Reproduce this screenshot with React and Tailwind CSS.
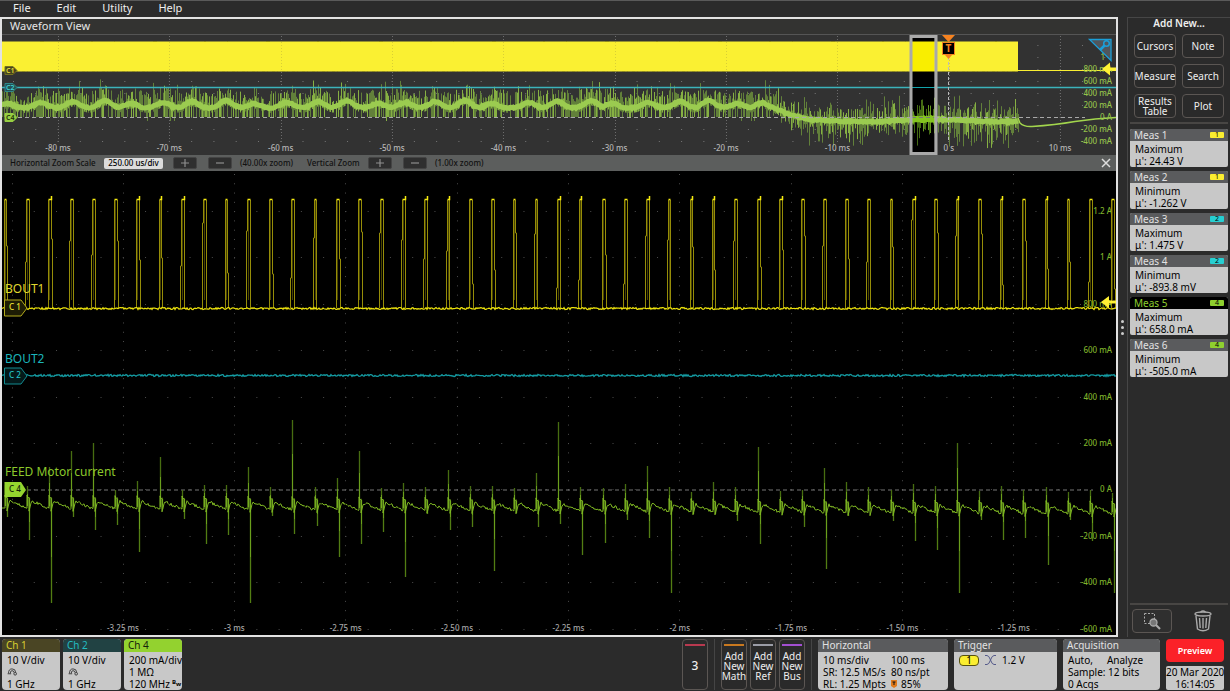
import React, { useState } from "react";

// small seeded generator so the traces look the same on every render
const makeRandom = (seed) => () => {
  seed = (seed * 1664525 + 1013904223) % 4294967296;
  return seed / 4294967296;
};

const measurements = [
  { name: "Meas 1", type: "Maximum", value: "24.43 V", source: 1 },
  { name: "Meas 2", type: "Minimum", value: "-1.262 V", source: 1 },
  { name: "Meas 3", type: "Maximum", value: "1.475 V", source: 2 },
  { name: "Meas 4", type: "Minimum", value: "-893.8 mV", source: 2 },
  { name: "Meas 5", type: "Maximum", value: "658.0 mA", source: 4, active: true },
  { name: "Meas 6", type: "Minimum", value: "-505.0 mA", source: 4 },
];

const sourceColor = {
  1: "bg-[#fbee30]",
  2: "bg-[#26cfd2]",
  4: "bg-[#8fd02f]",
};

// [top, bottom] of the current spike at each PWM pulse
const spikes = [
  [485, 517], [486, 540], [467, 603], [451, 517], [443, 530], [490, 525], [481, 552], [457, 509],
  [490, 519], [485, 544], [485, 535], [467, 603], [487, 516], [420, 534], [487, 526], [478, 557],
  [451, 544], [488, 532], [483, 577], [487, 514], [470, 530], [486, 527], [486, 571], [488, 513],
  [473, 527], [422, 524], [487, 555], [488, 543], [484, 520], [466, 538], [487, 593], [492, 514],
  [482, 514], [487, 521], [447, 544], [491, 513], [490, 527], [468, 569], [482, 516], [487, 509],
  [490, 521], [484, 541], [486, 550], [443, 593], [491, 520], [486, 540], [490, 538], [487, 565],
  [492, 520], [490, 541], [493, 593],
];

const PULSE_START = 4.5;
const PULSE_STEP = 22.15;

const pulseX = (i) => PULSE_START + i * PULSE_STEP;

const noiseLine = (y, amp, seed) => {
  const rnd = makeRandom(seed);
  let d = `M2 ${y}`;
  for (let x = 3; x <= 1116; x++) {
    d += `L${x} ${(y + (rnd() - 0.5) * amp).toFixed(1)}`;
  }
  return d;
};

const buildPulses = () => {
  const rnd = makeRandom(12);
  let edges = "";
  let tops = "";
  let inner = "";
  spikes.forEach((_, i) => {
    const x = Math.round(pulseX(i)) + 0.5 - 1;
    const w = rnd() > 0.3 ? 3 : 2;
    const bend = Math.round(220 + rnd() * 70);
    if (rnd() > 0.5) {
      edges += `M${x - 1} 308V${bend}H${x}V200M${x + w} 200V308`;
    } else {
      edges += `M${x} 308V200M${x + w} 200V${bend}H${x + w + 1}V308`;
    }
    inner += `M${x + 1} 200V300`;
    tops += rnd() > 0.65 ? `M${x} 199.5H${x + w}V196` : `M${x} 199.5H${x + w}`;
  });
  return { edges, tops, inner };
};

const buildFeed = () => {
  const rnd = makeRandom(77);
  let line = "M2 508";
  let spikeUp = "";
  let spikeDown = "";
  let core = "";
  spikes.forEach(([top, bottom], i) => {
    const x = Math.round(pulseX(i));
    const drift = (i / 50) * 6;
    const low = 508 + drift;
    line += `L${x} ${low}V${495 + drift}L${x + 1} ${498 + drift}L${x + 2} ${497 + drift}V${511 + drift}L${x + 4} ${503 + drift}`;
    for (let k = 5; k < 22; k++) {
      const y = 501 + drift * 0.9 + ((k - 5) / 16) * 7 + (rnd() - 0.5) * 3;
      line += `L${x + k} ${y.toFixed(1)}`;
    }
    spikeUp += `M${x + 0.5} ${top}V${506 + drift}`;
    spikeDown += `M${x + 2.5} ${498 + drift}V${bottom}`;
    // the part near the baseline is hit more often, so it glows brighter
    core += `M${x + 0.5} ${Math.round(506 - (506 - top) * 0.6)}V${506 + drift}`;
    core += `M${x + 2.5} ${498 + drift}V${Math.round(500 + (bottom - 500) * 0.55)}`;
  });
  return { line, spikeUp, spikeDown, core };
};

const crests = [
  7, 41, 73, 105, 131, 163, 192, 226, 254, 287, 318, 347, 378, 405, 435, 465, 492, 529, 557, 591,
  612, 648, 680, 709, 737, 763,
];

const bandY = (x) => {
  if (x < 765) {
    let lift = 0;
    crests.forEach((c, i) => {
      lift = Math.max(lift, (4.5 + ((i * 5) % 4)) * Math.exp(-((x - c) * (x - c)) / 75));
    });
    return 108 - lift;
  }
  if (x < 790) return 104 + ((x - 765) / 25) * 11;
  if (x < 815) return 115 + ((x - 790) / 25) * 6;
  return 120.5 + Math.sin(x / 22) * 1.2;
};

const buildOverview = () => {
  const rnd = makeRandom(5);
  let band = "";
  let soft = "";
  let strong = "";
  for (let x = 2; x <= 1018; x++) {
    const y = bandY(x);
    band += `${band ? "L" : "M"}${x} ${(y + (rnd() - 0.5) * 1.5).toFixed(1)}`;
    let up;
    let down;
    if (x < 770) {
      up = y - 4 - rnd() * (rnd() > 0.85 ? 20 : 13);
      down = rnd() > 0.4 ? 117 : y + 5;
      if (rnd() > 0.99) down = 121;
    } else {
      const reach = Math.min(1, (x - 760) / 50);
      up = y - 3 - rnd() * (rnd() > 0.7 ? 22 : 12);
      down = y + 3 + rnd() * (rnd() > 0.6 ? 24 : 12) * reach;
    }
    const seg = `M${x + 0.5} ${up.toFixed(1)}V${down.toFixed(1)}`;
    const pick = rnd();
    if (pick > 0.76) strong += seg;
    else if (pick > 0.22) soft += seg;
  }
  return { band, soft, strong };
};

const pulses = buildPulses();
const feed = buildFeed();
const overview = buildOverview();

const range = (n) => Array.from({ length: n }, (_, i) => i);

const Overview = () => {
  const times = ["-80 ms", "-70 ms", "-60 ms", "-50 ms", "-40 ms", "-30 ms", "-20 ms", "-10 ms", "0 s", "10 ms"];
  const amps = ["1", "800 mA", "600 mA", "400 mA", "200 mA", "0 A", "-200 mA", "-400 mA"];
  return (
    <svg viewBox="2 35 1114 120" className="block w-full h-auto bg-[#323232] text-[8px] font-medium" role="img" aria-label="Record overview">
      <clipPath id="zoomWindow">
        <rect x="912" y="38" width="22" height="114" />
      </clipPath>
      <g stroke="#777" strokeDasharray="1 21.27">
        {range(9).map((r) => (
          <line key={r} x1="13" x2="1116" y1={45.5 + r * 12} y2={45.5 + r * 12} />
        ))}
      </g>
      <g stroke="#6c6c6c" strokeDasharray="1 2">
        {range(10).map((i) => (
          <line key={i} x1={Math.round(58 + i * 111.35) + 0.5} x2={Math.round(58 + i * 111.35) + 0.5} y1="36" y2="142" />
        ))}
      </g>
      <rect x="2" y="41.5" width="1016" height="30" fill="#faf032" />
      <path d="M2 71.5H1018" stroke="#8f8920" strokeDasharray="3 2 1 4" />
      <path d="M40 41.5H1010" stroke="#8f8920" strokeDasharray="4 47 2 21 1 38" />
      <g stroke="#d9cf35" strokeDasharray="1 2">
        {range(9).map((i) => (
          <line key={i} x1={Math.round(58 + i * 111.35) + 0.5} x2={Math.round(58 + i * 111.35) + 0.5} y1="42" y2="71" />
        ))}
      </g>
      <path d="M1018 70.5H1116" stroke="#faf032" />
      <g fill="none">
        <path d={overview.soft} stroke="#62803a" strokeWidth="1" />
        <path d={overview.strong} stroke="#86b043" strokeWidth="1" />
        <path d={overview.band} stroke="#9bcb50" strokeWidth="5" />
      </g>
      <path d="M2 87.5H1116" stroke="#3bb3bb" strokeWidth="1.3" />
      <path d="M18 117.5H1085" stroke="#a8a8a8" strokeDasharray="4 3" />

      <g clipPath="url(#zoomWindow)">
        <rect x="912" y="38" width="22" height="114" fill="#000" />
        <rect x="912" y="41.5" width="22" height="30" fill="#f9ee00" />
        <path d={overview.soft} stroke="#456b14" fill="none" />
        <path d={overview.strong} stroke="#66991e" fill="none" />
        <path d={overview.band} stroke="#84c420" strokeWidth="6" fill="none" />
        <path d="M912 87.5H934" stroke="#12a4ac" />
        <path d="M912 117.5H934" stroke="#777" strokeDasharray="4 3" />
      </g>
      <rect x="911" y="36.5" width="25" height="117" fill="none" stroke="#a9a9a9" strokeWidth="3" />

      <path d="M1018 118L1020 123Q1024 127 1032 126.5Q1055 125 1075 121.5Q1095 118.5 1116 117.5" fill="none" stroke="#a3d64d" strokeWidth="1.4" />
      <path d="M948.5 57V142" stroke="#bbb" strokeDasharray="3 2" />
      <path d="M942 35H955L948.5 42ZM945 55H952L948.5 59Z" fill="#f58220" />
      <rect x="942.5" y="42.5" width="12" height="12" fill="#000" stroke="#f58220" />
      <text x="948.5" y="52" textAnchor="middle" className="fill-[#f58220] text-[10px] font-bold">T</text>

      <g className="fill-[#b5b5b5]" textAnchor="middle">
        {times.map((t, i) => (
          <text key={t} x={58 + i * 111.35} y="151">{t}</text>
        ))}
      </g>
      <g className="fill-[#94c14a]" textAnchor="end">
        {amps.map((t, i) => (
          <text key={t} x={i === 0 ? 1105 : 1112} y={60 + i * 12}>{t}</text>
        ))}
      </g>

      <path d="M1089.5 39.5H1111V60.5Z" fill="#50565c" stroke="#1b9fd8" strokeWidth="1.3" />
      <circle cx="1106.5" cy="43.5" r="2.8" fill="none" stroke="#1b9fd8" strokeWidth="1.5" />
      <path d="M1104.5 45.5L1100 50" stroke="#1b9fd8" strokeWidth="2.5" />
      <path d="M1102 69L1110 62.5V67.5H1116V70.5H1110V75.5Z" fill="#fff133" />

      <path d="M5 66.5H13L17 70.5L13 74.5H5Z" fill="#46451c" stroke="#75701f" />
      <path d="M5 83.5H13L17 87.5L13 91.5H5Z" fill="#245153" stroke="#2f8689" />
      <path d="M5 113.5H13L17 117.5L13 121.5H5Z" fill="#97cf42" stroke="#97cf42" />
      <g className="text-[7px] font-semibold">
        <text x="6" y="73" className="fill-[#e6dc3a]">C1</text>
        <text x="6" y="90" className="fill-[#3fd0d4]">C2</text>
        <text x="6" y="120" className="fill-[#20300a]">C4</text>
      </g>
    </svg>
  );
};

const ZoomPlot = () => {
  const times = ["-3.25 ms", "-3 ms", "-2.75 ms", "-2.50 ms", "-2.25 ms", "-2 ms", "-1.75 ms", "-1.50 ms", "-1.25 ms"];
  const amps = ["1.2 A", "1 A", "800 mA", "600 mA", "400 mA", "200 mA", "0 A", "-200 mA", "-400 mA", "-600 mA"];
  return (
    <svg viewBox="2 171 1114 464" className="block w-full h-auto bg-black text-[8px] font-medium" role="img" aria-label="Zoomed waveforms">
      <g stroke="#4c4c4c" strokeDasharray="1 21.26">
        {range(10).map((r) => (
          <line key={r} x1="11.5" x2="1085" y1={Math.round(211 + r * 46.4) + 0.5} y2={Math.round(211 + r * 46.4) + 0.5} />
        ))}
      </g>
      <g stroke="#4c4c4c" strokeDasharray="1 8.28">
        {range(10).map((i) => (
          <line key={i} x1={Math.round(11.5 + i * 111.3) + 0.5} x2={Math.round(11.5 + i * 111.3) + 0.5} y1="174" y2="624" />
        ))}
      </g>
      <path d="M27 490H1093" stroke="#777" strokeDasharray="4 3" />

      <g className="fill-[#7fb22b]" textAnchor="end">
        {amps.map((t, i) => (
          <text key={t} x="1112" y={Math.round(214 + i * 46.4)}>{t}</text>
        ))}
      </g>

      <g fill="none">
        <path d={pulses.inner} stroke="#4a4500" />
        <path d={pulses.edges} stroke="#968d08" />
        <path d={pulses.tops} stroke="#f5ea10" strokeWidth="1.5" />
        <path d={noiseLine(308.5, 2, 31)} stroke="#ece20c" strokeWidth="1.2" />
        <path d={noiseLine(375.5, 2, 9)} stroke="#149ba2" strokeWidth="1.3" />
        <path d={feed.spikeUp} stroke="#476d11" strokeWidth="1.3" />
        <path d={feed.spikeDown} stroke="#527d13" strokeWidth="1.3" />
        <path d={feed.core} stroke="#6a9f1c" />
        <path d={feed.line} stroke="#7fb723" />
      </g>

      <g className="fill-[#a5a5a5]" textAnchor="middle">
        {times.map((t, i) => (
          <text key={t} x={123 + i * 111.35} y="631">{t}</text>
        ))}
      </g>

      <g className="text-[12px] font-normal">
        <text x="5" y="293" className="fill-[#e0d82f]">BOUT1</text>
        <text x="5" y="363" className="fill-[#1bb5bb]">BOUT2</text>
        <text x="5" y="476" className="fill-[#8bc72b]">FEED Motor current</text>
      </g>

      <path d="M4.500 300H21L27 308L21 316H4.500Z" fill="#1d1c05" stroke="#b3aa1c" />
      <path d="M4.500 368H21L27 376L21 384H4.500Z" fill="#04191a" stroke="#128b90" />
      <path d="M4.500 482H21L26 490L21 497H4.500Z" fill="#95d52f" />
      <g className="text-[8px] font-medium">
        <text x="9" y="310" className="fill-[#ece334]">C 1</text>
        <text x="9" y="378" className="fill-[#25c3c8]">C 2</text>
        <text x="9" y="492" className="fill-[#14200a]">C 4</text>
      </g>
      <path d="M1101 302L1109 296V300.500H1116V303.500H1109V308.500Z" fill="#fff133" />
    </svg>
  );
};

const StepButton = ({ label, sign }) => (
  <button type="button" aria-label={label} className="flex h-3 w-6 items-center justify-center rounded-xs border border-[#444] bg-[#2f2f2f]">
    <svg viewBox="0 0 9 9" className="size-2" stroke="#909090" strokeWidth="1.3">
      <path d={sign === "+" ? "M0 4.500H9M4.500 0V9" : "M0 4.500H9"} />
    </svg>
  </button>
);

const ZoomBar = () => {
  const [scale, setScale] = useState("250.00 us/div");
  return (
    <div className="flex h-4 items-center bg-[#5c5e5d] pl-2 pr-1 text-[8px] font-medium text-[#111]">
      <label htmlFor="zoom-scale" className="w-[94px] whitespace-nowrap">Horizontal Zoom Scale</label>
      <input
        id="zoom-scale"
        value={scale}
        onChange={(e) => setScale(e.target.value)}
        className="h-[11px] w-[59px] rounded-xs bg-[#dcdcdc] text-center text-black outline-none"
      />
      <div className="ml-2.5 flex items-center gap-[11px]">
        <StepButton label="Increase horizontal zoom" sign="+" />
        <StepButton label="Decrease horizontal zoom" sign="-" />
      </div>
      <span className="ml-2 w-[67px] whitespace-nowrap">(40.00x zoom)</span>
      <span className="w-[61px] whitespace-nowrap">Vertical Zoom</span>
      <div className="flex items-center gap-[11px]">
        <StepButton label="Increase vertical zoom" sign="+" />
        <StepButton label="Decrease vertical zoom" sign="-" />
      </div>
      <span className="ml-2">(1.00x zoom)</span>
      <button type="button" aria-label="Close zoom" className="ml-auto flex size-3 items-center justify-center">
        <svg viewBox="0 0 10 10" className="size-2.5" stroke="#ddd" strokeWidth="1.5">
          <path d="M1 1L9 9M9 1L1 9" />
        </svg>
      </button>
    </div>
  );
};

const SideButton = ({ children }) => (
  <button type="button" className="flex h-6 items-center justify-center rounded-sm border border-[#5b5653] bg-[#2a2a2a] text-[10px] leading-[10px] text-[#eee]">
    {children}
  </button>
);

const Measurement = ({ item }) => (
  <section className="overflow-hidden rounded-xs bg-[#c8c8c8]">
    <header className={`flex h-3 items-center justify-between pl-1 pr-1 ${item.active ? "bg-black text-[#8fd02f]" : "bg-[#5a5b5d] text-[#e2e2e2]"}`}>
      <h3>{item.name}</h3>
      <span className={`flex h-1.5 w-3.5 items-center justify-center rounded-[1px] text-[7px] text-black ${sourceColor[item.source]}`}>{item.source}</span>
    </header>
    <div className="h-[26px] pl-[5px] pt-0.5 leading-3 text-black">
      <p>{item.type}</p>
      <p>μ': {item.value}</p>
    </div>
  </section>
);

const SidePanel = () => (
  <aside className="flex w-[103px] flex-col border-t border-l border-[#464646] px-0.5 text-[10px]">
    <h2 className="text-center font-semibold leading-[10px] text-[#eee]">Add New...</h2>
    <div className="mx-1 mt-1.5 grid grid-cols-2 gap-x-1.5 gap-y-1.5">
      <SideButton>Cursors</SideButton>
      <SideButton>Note</SideButton>
      <SideButton>Measure</SideButton>
      <SideButton>Search</SideButton>
      <SideButton>Results Table</SideButton>
      <SideButton>Plot</SideButton>
    </div>
    <hr className="mt-1 border-t-2 border-[#484644]" />
    <div className="mt-[5px] flex flex-col gap-1">
      {measurements.map((m) => (
        <Measurement key={m.name} item={m} />
      ))}
    </div>
    <div className="mt-auto flex h-[34px] items-center justify-between border-t-2 border-[#484644] pl-0.5 pr-4">
      <button type="button" aria-label="Zoom to area" className="flex h-6 w-10 items-center justify-center rounded-sm border border-[#5b5653] bg-[#2f2f2f]">
        <svg viewBox="0 0 18 18" className="size-[18px]" fill="none" stroke="#aaa">
          <rect x="1.500" y="1.500" width="10" height="10" strokeDasharray="2 1.500" />
          <circle cx="10.500" cy="10.500" r="3.500" fill="#777" strokeWidth="1.3" />
          <path d="M13 13L17 17" strokeWidth="2.200" />
        </svg>
      </button>
      <button type="button" aria-label="Trash" className="flex items-center justify-center">
        <svg viewBox="0 0 18 22" className="h-[22px] w-[18px]" fill="none" stroke="#aaa" strokeWidth="1.400">
          <ellipse cx="9" cy="4" rx="8" ry="2" />
          <path d="M6.500 2Q9 0 11.500 2M2 6L3.500 19Q9 22.500 14.500 19L16 6M5.500 8L6.200 18M9 8V18.500M12.500 8L11.800 18" />
        </svg>
      </button>
    </div>
  </aside>
);

const Badge = ({ title, head, width, children }) => (
  <section className={`overflow-hidden rounded-sm bg-[#c8c8c8] ${width}`}>
    <h3 className={`h-[13px] pl-1 leading-3 ${head}`}>{title}</h3>
    <div className="pl-[5px] pt-0.5 leading-3 whitespace-nowrap text-black">{children}</div>
  </section>
);

const Probe = () => (
  <svg viewBox="0 0 11 9" className="my-0.5 block h-2 w-[11px]" fill="none" stroke="#333">
    <path d="M1 6Q1 1 5 1Q9 1 9 5M3 6Q3 3 5 3Q7 3 7 5M0 6.500H4" />
    <circle cx="8.500" cy="6.500" r="1.500" />
  </svg>
);

const AddButton = ({ bar, children }) => (
  <button type="button" className="flex w-[26px] flex-col items-center rounded-sm border border-[#5b5653] bg-[#2a2a2a] px-0.5 pt-1 pb-1 text-[#eee]">
    <span className={`h-0.5 w-full ${bar}`}></span>
    <span className="flex flex-1 items-center leading-[10px]">{children}</span>
  </button>
);

const StatusBar = () => (
  <footer className="flex h-[54px] pt-0.5 pb-px pl-0.5 pr-1.5 text-[10px]">
    <div className="flex gap-[3px]">
      <Badge title="Ch 1" head="bg-[#4a4524] text-[#d8cf30]" width="w-[58px]">
        <p>10 V/div</p>
        <Probe />
        <p>1 GHz</p>
      </Badge>
      <Badge title="Ch 2" head="bg-[#214243] text-[#24bcc1]" width="w-[58px]">
        <p>10 V/div</p>
        <Probe />
        <p>1 GHz</p>
      </Badge>
      <Badge title="Ch 4" head="bg-[#93d22f] text-[#16210a]" width="w-[58px]">
        <p>200 mA/div</p>
        <p>1 MΩ</p>
        <p className="flex">
          <span>120 MHz</span>
          <span className="ml-0.5 text-[6px] leading-[8px] font-bold">B</span>
          <span className="text-[6px] font-bold">w</span>
        </p>
      </Badge>
    </div>

    <div className="ml-auto flex gap-[3px]">
      <button type="button" className="flex w-[26px] flex-col items-center rounded-sm border border-[#5b5653] bg-[#2a2a2a] px-0.5 pt-1 pb-1 text-[#eee]">
        <span className="h-0.5 w-full bg-[#b8394f]"></span>
        <span className="flex flex-1 items-center text-[12px] font-medium">3</span>
      </button>
      <div className="mx-[3px] w-px bg-[#454545]"></div>
      <AddButton bar="bg-[#c8781f]">Add New Math</AddButton>
      <AddButton bar="bg-[#9a9ca6]">Add New Ref</AddButton>
      <AddButton bar="bg-[#a24fd0]">Add New Bus</AddButton>
      <div className="mx-[3px] w-px bg-[#454545]"></div>
    </div>

    <div className="ml-[3px] flex gap-1.5">
      <Badge title="Horizontal" head="bg-[#5a5b5d] text-[#e2e2e2]" width="w-[130px]">
        <div className="grid grid-cols-[68px_1fr]">
          <span>10 ms/div</span>
          <span>100 ms</span>
          <span>SR: 12.5 MS/s</span>
          <span>80 ns/pt</span>
          <span>RL: 1.25 Mpts</span>
          <span className="flex items-center gap-1">
            <svg viewBox="0 0 6 8" className="h-2 w-1.5">
              <path d="M0 0H6V6L3 8L0 6Z" fill="#e07a1c" />
              <path d="M1.500 2H4.500M3 2V5" stroke="#111" />
            </svg>
            85%
          </span>
        </div>
      </Badge>
      <Badge title="Trigger" head="bg-[#5a5b5d] text-[#e2e2e2]" width="w-[103px]">
        <div className="flex items-center gap-1.5">
          <span className="flex h-[11px] w-5 items-center justify-center rounded-sm border border-[#555010] bg-[#fbee30]">1</span>
          <svg viewBox="0 0 11 10" className="h-2.5 w-[11px]" fill="none" stroke="#555a8a">
            <path d="M0 .5H2Q4 .5 5.500 5T9 9.500H11M0 9.500H2Q4 9.500 5.500 5T9 .5H11" />
          </svg>
          <span>1.2 V</span>
        </div>
      </Badge>
      <Badge title="Acquisition" head="bg-[#5a5b5d] text-[#e2e2e2]" width="w-[97px]">
        <p className="flex gap-3.5"><span>Auto,</span><span>Analyze</span></p>
        <p>Sample: 12 bits</p>
        <p>0 Acqs</p>
      </Badge>
      <div className="flex w-[58px] flex-col justify-between">
        <button type="button" className="h-[23px] rounded-sm bg-[#fb2128] text-[9px] font-semibold text-white">Preview</button>
        <time className="rounded-xs bg-[#c8c8c8] text-center leading-3 whitespace-nowrap text-black">
          20 Mar 2020<br />16:14:05
        </time>
      </div>
    </div>
  </footer>
);

export default function App() {
  return (
    <div className="flex min-h-screen flex-col bg-[#2b2b2b] font-['Noto_Sans',sans-serif]">
      <nav className="flex h-[17px] items-center gap-[26px] border-t border-[#5a5a5a] pb-[3px] pl-[13px] text-[11px] leading-3 text-[#eee]">
        <button type="button">File</button>
        <button type="button">Edit</button>
        <button type="button">Utility</button>
        <button type="button">Help</button>
      </nav>
      <main className="flex">
        <section className="min-w-0 flex-1 border-2 border-[#e2e2e2]">
          <h1 className="h-4 border-b border-[#555] bg-[#333331] pl-2 text-[11px] leading-[14px] text-[#e6e6e6]">Waveform View</h1>
          <Overview />
          <ZoomBar />
          <ZoomPlot />
        </section>
        <div className="flex w-[9px] flex-col items-center justify-center gap-[3px]">
          <span className="size-[3px] rounded-full bg-[#ccc]"></span>
          <span className="size-[3px] rounded-full bg-[#ccc]"></span>
          <span className="size-[3px] rounded-full bg-[#ccc]"></span>
        </div>
        <SidePanel />
      </main>
      <StatusBar />
    </div>
  );
}
